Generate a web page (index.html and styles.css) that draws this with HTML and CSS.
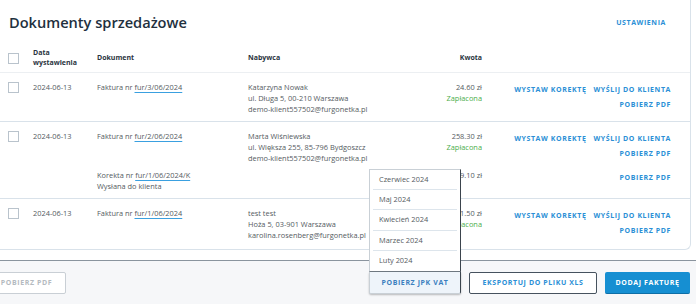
FILE: index.html
```html
<!DOCTYPE html>
<html lang="pl">
<head>
    <meta charset="UTF-8">
    <meta name="viewport" content="width=device-width, initial-scale=1.0">
    <title>Dokumenty sprzedażowe</title>
    <link rel="stylesheet" href="styles.css">
</head>
<body>

    <div class="page">
        <div class="card">
            <div class="card-head">
                <h1>Dokumenty sprzedażowe</h1>
                <a class="action">Ustawienia</a>
            </div>

            <div class="row head">
                <div class="cell"><span class="check"></span></div>
                <div class="cell">Data<br>wystawienia</div>
                <div class="cell">Dokument</div>
                <div class="cell">Nabywca</div>
                <div class="cell amount">Kwota</div>
                <div class="cell"></div>
            </div>

            <div class="row">
                <div class="cell"><span class="check"></span></div>
                <div class="cell">2024-06-13</div>
                <div class="cell">Faktura nr <a class="doc">fur/3/06/2024</a></div>
                <div class="cell">Katarzyna Nowak<br>ul. Długa 5, 00-210 Warszawa<br>demo-klient557502@furgonetka.pl</div>
                <div class="cell amount">24.60 zł<br><span class="paid">Zapłacona</span></div>
                <div class="cell actions">
                    <div><a class="action">Wystaw korektę</a><a class="action">Wyślij do klienta</a></div>
                    <div><a class="action">Pobierz PDF</a></div>
                </div>
            </div>

            <div class="row">
                <div class="cell"><span class="check"></span></div>
                <div class="cell">2024-06-13</div>
                <div class="cell">Faktura nr <a class="doc">fur/2/06/2024</a></div>
                <div class="cell">Marta Wiśniewska<br>ul. Większa 255, 85-796 Bydgoszcz<br>demo-klient557502@furgonetka.pl</div>
                <div class="cell amount">258.30 zł<br><span class="paid">Zapłacona</span></div>
                <div class="cell actions">
                    <div><a class="action">Wystaw korektę</a><a class="action">Wyślij do klienta</a></div>
                    <div><a class="action">Pobierz PDF</a></div>
                </div>

                <div class="cell sub"></div>
                <div class="cell sub"></div>
                <div class="cell sub">Korekta nr <a class="doc">fur/1/06/2024/K</a><br>Wysłana do klienta</div>
                <div class="cell sub"></div>
                <div class="cell sub amount">209.10 zł</div>
                <div class="cell sub actions">
                    <div><a class="action">Pobierz PDF</a></div>
                </div>
            </div>

            <div class="row last">
                <div class="cell"><span class="check"></span></div>
                <div class="cell">2024-06-13</div>
                <div class="cell">Faktura nr <a class="doc">fur/1/06/2024</a></div>
                <div class="cell">test test<br>Hoża 5, 03-901 Warszawa<br>karolina.rosenberg@furgonetka.pl</div>
                <div class="cell amount">31.50 zł<br><span class="paid">Zapłacona</span></div>
                <div class="cell actions">
                    <div><a class="action">Wystaw korektę</a><a class="action">Wyślij do klienta</a></div>
                    <div><a class="action">Pobierz PDF</a></div>
                </div>
            </div>
        </div>

        <div class="footer">
            <button class="btn disabled">Pobierz PDF</button>
            <div class="footer-right">
                <div class="jpk">
                    <ul class="jpk-menu">
                        <li>Czerwiec 2024</li>
                        <li>Maj 2024</li>
                        <li>Kwiecień 2024</li>
                        <li>Marzec 2024</li>
                        <li>Luty 2024</li>
                    </ul>
                    <button class="btn jpk-btn">Pobierz JPK VAT</button>
                </div>
                <button class="btn outline">Eksportuj do pliku XLS</button>
                <button class="btn primary">Dodaj fakturę</button>
            </div>
        </div>
    </div>

</body>
</html>
```

FILE: styles.css
```css
body {
    font-family: 'Open Sans', 'DejaVu Sans', sans-serif;
    margin: 0;
    padding: 0;
    background-color: #fff;
    color: #555b62;
    overflow: hidden;
}

.page {
    width: 696px;
    height: 304px;
}

.card {
    width: 691px;
    height: 250px;
    box-sizing: border-box;
    border-right: 1px solid #d9e2ea;
    border-bottom: 1px solid #d9e2ea;
    border-bottom-right-radius: 6px;
}

.card-head {
    height: 44px;
    display: flex;
    align-items: center;
    justify-content: space-between;
    padding: 0 24px 0 9px;
}

h1 {
    margin: 0;
    font-size: 14.6px;
    font-weight: 600;
    color: #22303e;
}

.action {
    font-size: 7px;
    font-weight: 700;
    letter-spacing: 0.6px;
    text-transform: uppercase;
    white-space: nowrap;
    color: #2b8fd6;
    cursor: pointer;
}

.row {
    display: grid;
    grid-template-columns: 33px 64px 151px 1fr 63px 208px;
    font-size: 7.4px;
    line-height: 11px;
    border-bottom: 1px solid #d9e2ea;
}

.row.head {
    height: 29px;
    box-sizing: border-box;
    align-items: center;
    font-weight: 700;
    font-size: 7px;
    line-height: 10px;
    color: #2a3440;
    border-bottom-color: #eceff2;
}

.row.last {
    border-bottom: none;
}

.cell {
    padding-top: 9px;
    padding-bottom: 6px;
}

.row.head .cell {
    padding: 0;
}

.cell.sub {
    padding-top: 0;
    padding-bottom: 6px;
}

.cell.amount {
    text-align: right;
}

.check {
    display: block;
    width: 9px;
    height: 9px;
    margin-left: 8px;
    border: 1px solid #b9c3cc;
    background-color: #fff;
}

.doc {
    color: #555b62;
    text-decoration: underline;
    text-decoration-color: #3aa0e0;
    text-underline-offset: 2px;
}

.paid {
    color: #4cae4c;
}

.actions {
    text-align: right;
    padding-right: 19px;
}

.actions div {
    line-height: 14px;
}

.actions .action + .action {
    margin-left: 7px;
}

.footer {
    margin-top: 10px;
    height: 43px;
    border-top: 1px solid #8a949e;
    background-color: #f6f7f9;
    display: flex;
    align-items: center;
    justify-content: space-between;
    padding: 0 6px 0 0;
}

.btn {
    font-family: 'Open Sans', 'DejaVu Sans', sans-serif;
    height: 22px;
    padding: 0;
    font-size: 7px;
    font-weight: 700;
    letter-spacing: 0.6px;
    text-transform: uppercase;
    white-space: nowrap;
    border-radius: 2px;
    cursor: pointer;
}

.btn.disabled {
    margin-left: -13px;
    width: 79px;
    background-color: #fff;
    color: #b4bac0;
    border: 1px solid #c9cfd5;
}

.footer-right {
    display: flex;
    gap: 8px;
    align-items: center;
}

.btn.outline {
    width: 128px;
    background-color: #fff;
    color: #2b8fd6;
    border: 1px solid #46525e;
}

.btn.primary {
    width: 85px;
    background-color: #168fd2;
    color: #fff;
    border: none;
    border-bottom: 1px solid #0e6ea6;
}

.jpk {
    position: relative;
    width: 92px;
}

.jpk-menu {
    position: absolute;
    bottom: 22px;
    left: 0;
    right: 0;
    margin: 0;
    padding: 0;
    list-style: none;
    background-color: #fff;
    border: 1px solid #c9d0d6;
    border-right: 1px solid #3b444d;
    border-bottom: 1px solid #6d7780;
}

.jpk-menu li {
    height: 19.4px;
    line-height: 19px;
    margin: 0 3px;
    padding-left: 6px;
    font-size: 7.4px;
    color: #555b62;
    border-bottom: 1px solid #dde5ec;
}

.jpk-menu li:last-child {
    border-bottom: none;
}

.btn.jpk-btn {
    display: block;
    width: 92px;
    background-color: #eef4fa;
    color: #3b7fbf;
    border: 1px solid #c9d0d6;
    border-top: none;
    border-right: 1px solid #3b444d;
    border-radius: 0 0 2px 2px;
    box-shadow: 0 1px 2px rgba(0, 0, 0, 0.25);
}
```
